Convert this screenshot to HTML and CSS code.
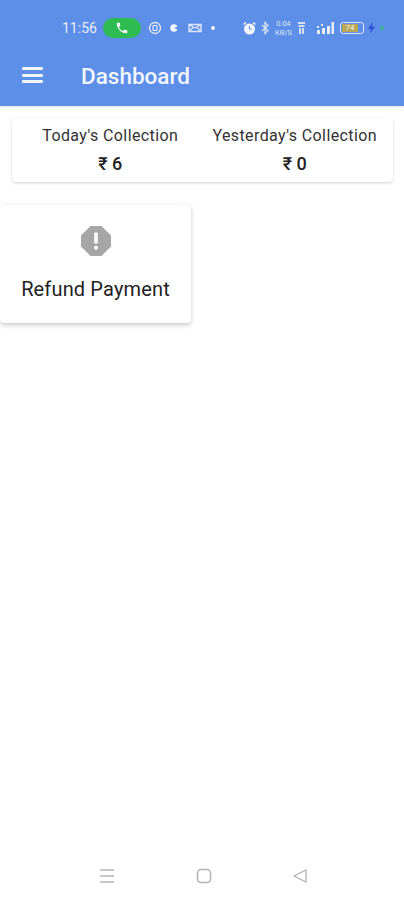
FILE: index.html
```html
<!DOCTYPE html>
<html>
<head>
    <title>Dashboard</title>
    <link rel="stylesheet" href="styles.css">
</head>
<body>
    <div class="page">
        <header class="header">
            <div class="status-bar">
                <span class="time">11:56</span>
                <span class="call-pill">
                    <svg width="14" height="14" viewBox="0 0 24 24"><path fill="#fff" d="M6.6 10.8c1.4 2.8 3.8 5.100 6.600 6.600l2.200-2.200c.3-.3.700-.4 1-.2 1.100.4 2.300.6 3.600.6.600 0 1 .4 1 1V20c0 .6-.4 1-1 1C10.600 21 3 13.400 3 4c0-.6.400-1 1-1h3.500c.6 0 1 .4 1 1 0 1.300.2 2.500.6 3.600.1.300 0 .7-.2 1z"/></svg>
                </span>
                <svg class="icon-a" width="14" height="14" viewBox="0 0 14 14"><circle cx="7" cy="7" r="5.500" fill="none" stroke="#e6eefc" stroke-width="1.300"/><rect x="5" y="4.500" width="4" height="5" rx="1" fill="none" stroke="#e6eefc" stroke-width="1.200"/></svg>
                <svg class="icon-b" width="10" height="10" viewBox="0 0 10 10"><path fill="#f2f6fe" d="M5 1.200a3.800 3.800 0 1 0 3.500 5.300L5 5l3.500-1.500A3.800 3.800 0 0 0 5 1.200z"/></svg>
                <svg class="icon-c" width="14" height="10" viewBox="0 0 14 10"><path fill="none" stroke="#dbe6fb" stroke-width="1.400" d="M1 1.500h12v7H1zM1 1.500l6 3.500 6-3.500M1 8.500l4.500-4.500M13 8.500L8.500 4"/></svg>
                <span class="dot"></span>
                <svg class="icon-alarm" width="15" height="15" viewBox="0 0 15 15"><circle cx="7.500" cy="8" r="5.500" fill="#f2f6fe"/><path d="M1.500 3.500l2.500-2M13.500 3.500l-2.500-2" stroke="#f2f6fe" stroke-width="1.500"/><path d="M7.500 5v3.200h2.200" fill="none" stroke="#5b8de8" stroke-width="1"/></svg>
                <svg class="icon-bt" width="8" height="14" viewBox="0 0 8 14"><path fill="none" stroke="#dbe6fb" stroke-width="1.200" d="M1 4l6 5.500-3 3V1.500l3 3L1 10"/></svg>
                <span class="speed"><span>0.04</span><span>KB/S</span></span>
                <svg class="icon-wifi" width="9" height="14" viewBox="0 0 9 14"><path fill="#d5e1fa" d="M1 1h7v2H1zM1.500 4h6v2h-6zM2 7h2v6H2zM5 7h2v6H5z"/></svg>
                <svg class="icon-signal" width="17" height="14" viewBox="0 0 17 14"><path fill="#e6eefc" d="M0 5h2v2H0zM0 9h3v4H0zM4 3h2v2H4zM5 7h3v6H5zM10 5h3v8h-3zM14.500 1h2.500v12h-2.500z"/></svg>
                <span class="battery"><span class="battery-level">74</span></span>
                <svg class="icon-bolt" width="7" height="12" viewBox="0 0 7 12"><path fill="#3355d6" d="M4.500 0L0 7h2.800L2 12l5-7.500H4z"/></svg>
                <span class="charge-dot"></span>
            </div>
            <div class="toolbar">
                <div class="menu-icon"><span></span><span></span><span></span></div>
                <h1 class="title">Dashboard</h1>
            </div>
        </header>

        <section class="summary">
            <div class="summary-item">
                <div class="summary-label">Today's Collection</div>
                <div class="summary-value">₹ 6</div>
            </div>
            <div class="summary-item">
                <div class="summary-label">Yesterday's Collection</div>
                <div class="summary-value">₹ 0</div>
            </div>
        </section>

        <section class="tiles">
            <div class="tile">
                <svg class="tile-icon" width="30" height="30" viewBox="0 0 30 30">
                    <path fill="#a6a6a6" d="M9.500 0h11L30 9.500v11L20.500 30h-11L0 20.500v-11z"/>
                    <rect x="13.200" y="6.500" width="3.600" height="11" rx="1" fill="#fff"/>
                    <circle cx="15" cy="21.800" r="2" fill="#fff"/>
                </svg>
                <div class="tile-label">Refund Payment</div>
            </div>
        </section>

        <nav class="nav-bar">
            <svg width="16" height="16" viewBox="0 0 16 16"><path stroke="#b4b4b4" stroke-width="1.500" d="M1 2h14M1 8h14M1 14h14"/></svg>
            <svg width="16" height="16" viewBox="0 0 16 16"><rect x="1.500" y="1.500" width="13" height="13" rx="3.500" fill="none" stroke="#b4b4b4" stroke-width="1.500"/></svg>
            <svg width="16" height="16" viewBox="0 0 16 16"><path fill="none" stroke="#b4b4b4" stroke-width="1.300" d="M14 2v12L2 8z"/></svg>
        </nav>
    </div>
</body>
</html>
```

FILE: styles.css
```css
* {
  box-sizing: border-box;
}

body {
  margin: 0;
  font-family: Roboto, "DejaVu Sans", sans-serif;
  background-color: #fff;
}

.page {
  display: flex;
  flex-direction: column;
  height: 900px;
  overflow: hidden;
}

.header {
  height: 106px;
  background-color: #5d8fe8;
  box-shadow: 0 1px 2px rgba(0, 0, 0, 0.12);
}

.status-bar {
  display: flex;
  align-items: center;
  height: 56px;
  padding-left: 62px;
}

.time {
  width: 35px;
  font-size: 14px;
  white-space: nowrap;
  color: #e6eefc;
  margin-right: 6px;
}

.call-pill {
  display: flex;
  align-items: center;
  justify-content: center;
  width: 38px;
  height: 20px;
  border-radius: 10px;
  background-color: #2dbb52;
  margin-right: 7px;
}

.icon-a { margin-right: 7px; }
.icon-b { margin-right: 9px; }
.icon-c { margin-right: 9px; }

.dot {
  width: 4px;
  height: 4px;
  border-radius: 50%;
  background-color: #f2f6fe;
  margin-right: 27px;
}

.icon-alarm { margin-right: 4px; }
.icon-bt { margin-right: 5px; }

.speed {
  display: flex;
  flex-direction: column;
  align-items: center;
  width: 19px;
  font-size: 7.500px;
  line-height: 9px;
  color: #dbe6fb;
  margin-right: 4px;
}

.icon-wifi { margin-right: 11px; }
.icon-signal { margin-right: 6px; }

.battery {
  display: flex;
  align-items: center;
  width: 24px;
  height: 12px;
  padding: 1px;
  border: 1px solid #dbe6fb;
  border-radius: 3px;
  margin-right: 4px;
}

.battery-level {
  width: 16px;
  height: 8px;
  background-color: #b9a650;
  color: #f2f6fe;
  font-size: 8px;
  line-height: 8px;
  text-align: center;
}

.icon-bolt { margin-right: 5px; }

.charge-dot {
  width: 4px;
  height: 4px;
  border-radius: 50%;
  background-color: #3cb48a;
}

.toolbar {
  display: flex;
  align-items: center;
  height: 40px;
  padding-left: 22px;
}

.menu-icon {
  display: flex;
  flex-direction: column;
  gap: 3.500px;
  width: 21px;
  margin: 0 38px 2px 0;
}

.menu-icon span {
  height: 3px;
  background-color: #f2f6fe;
  border-radius: 1px;
}

.title {
  margin: 0;
  font-size: 22.500px;
  font-weight: 500;
  color: #f2f6fe;
}

.summary {
  display: flex;
  height: 64px;
  margin: 12px 11px 0 12px;
  padding: 8px 6px 0;
  border-radius: 4px;
  background-color: #fff;
  box-shadow: 0 1px 3px rgba(0, 0, 0, 0.18);
}

.summary-item {
  flex: 1;
  text-align: center;
}

.summary-label {
  font-size: 16px;
  line-height: 19px;
  letter-spacing: 0.4px;
  color: #333;
  white-space: nowrap;
}

.summary-value {
  margin-top: 9px;
  font-size: 18px;
  line-height: 20px;
  font-weight: 500;
  color: #222;
}

.tiles {
  display: flex;
  margin-top: 23px;
}

.tile {
  display: flex;
  flex-direction: column;
  align-items: center;
  width: 191px;
  height: 118px;
  padding-top: 21px;
  border-radius: 4px;
  background-color: #fff;
  box-shadow: 0 2px 5px rgba(0, 0, 0, 0.22);
}

.tile-label {
  margin-top: 21px;
  font-size: 20px;
  line-height: 24px;
  letter-spacing: 0.15px;
  color: #222;
}

.nav-bar {
  display: flex;
  justify-content: space-between;
  width: 209px;
  margin: auto 0 16px 99px;
}
```
